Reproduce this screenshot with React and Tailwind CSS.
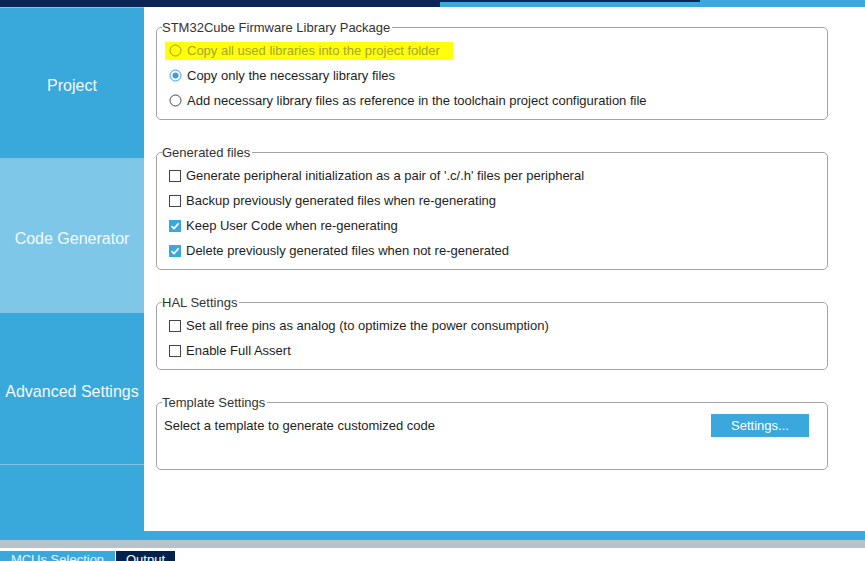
const font = { fontFamily: '"Liberation Sans", Arial, sans-serif' };

function Radio({ checked, dim }) {
  return (
    <svg width="13" height="13" viewBox="0 0 13 13" className="shrink-0">
      <circle cx="6.5" cy="6.5" r="5.5" fill={dim ? 'none' : '#fff'} stroke={checked ? '#3d9ddd' : dim ? '#9b9b2c' : '#444'} strokeWidth="1" />
      {checked && <circle cx="6.5" cy="6.5" r="3" fill="#3d9ddd" />}
    </svg>
  );
}

function Check({ checked }) {
  if (checked) {
    return (
      <svg width="12" height="12" viewBox="0 0 12 12" className="shrink-0">
        <rect x="0" y="0" width="12" height="12" fill="#3aa8dc" />
        <path d="M2.5 6.2 L5 8.6 L9.6 3.4" fill="none" stroke="#fff" strokeWidth="1.6" />
      </svg>
    );
  }
  return (
    <svg width="12" height="12" viewBox="0 0 12 12" className="shrink-0">
      <rect x="0.5" y="0.5" width="11" height="11" fill="#fff" stroke="#444" />
    </svg>
  );
}

function Group({ title, className, children }) {
  return (
    <fieldset className={`ml-3 w-[672px] rounded-[5px] border border-[#a3a3a3] ${className}`}>
      <legend className="ml-[5px] pr-[2px] text-[13px] leading-[15px] text-[#333]">{title}</legend>
      {children}
    </fieldset>
  );
}

function Row({ children, className = '' }) {
  return <div className={`flex h-[25px] items-center gap-[5px] pl-3 text-[13px] text-[#1e1e1e] ${className}`}>{children}</div>;
}

const sideItems = [
  { label: 'Project', h: 'h-[150px]', bg: 'bg-[#39a8db]' },
  { label: 'Code Generator', h: 'h-[154px]', bg: 'bg-[#7fc7e9]', active: true },
  { label: 'Advanced Settings', h: 'h-[151px]', bg: 'bg-[#39a8db]' },
];

export default function App() {
  return (
    <div className="flex h-[561px] w-[865px] flex-col overflow-hidden bg-white" style={font}>
      {/* top strip */}
      <div className="flex h-[7px] shrink-0 items-start bg-[#3aa8dc]">
        <div className="h-[7px] w-[440px] bg-[#0b2656]" />
        <div className="h-[2px] w-[260px] bg-[#0b2656]" />
      </div>

      <div className="flex h-[524px] shrink-0">
        <div className="flex w-[144px] shrink-0 flex-col bg-[#39a8db]">
          <div className="h-px bg-[#7cc5e8]" />
          {sideItems.map((s, i) => (
            <div key={s.label} className="flex flex-col">
              {i === 1 && <div className="h-px bg-[#7cc5e8]" />}
              <div className={`flex ${s.h} items-center justify-center pt-[6px] ${s.bg} text-[16px] text-[#f4fafd]`}>{s.label}</div>
            </div>
          ))}
          <div className="h-px bg-[#7cc5e8]" />
        </div>

        <div className="flex-1 pt-[13px]">
          <Group title="STM32Cube Firmware Library Package" className="pt-[3px] pb-[6px]">
            <div className="flex h-[25px] items-center pl-[8px] text-[13px]">
              <div className="flex h-[18px] w-[288px] items-center gap-[5px] bg-[#ffff0a] pl-[4px] text-[#a5a536]">
                <Radio dim />
                <span>Copy all used libraries into the project folder</span>
              </div>
            </div>
            <Row>
              <Radio checked />
              <span>Copy only the necessary library files</span>
            </Row>
            <Row>
              <Radio />
              <span>Add necessary library files as reference in the toolchain project configuration file</span>
            </Row>
          </Group>

          <Group title="Generated files" className="mt-[25px] pt-[3px] pb-[6px]">
            <Row>
              <Check />
              <span>Generate peripheral initialization as a pair of '.c/.h' files per peripheral</span>
            </Row>
            <Row>
              <Check />
              <span>Backup previously generated files when re-generating</span>
            </Row>
            <Row>
              <Check checked />
              <span>Keep User Code when re-generating</span>
            </Row>
            <Row>
              <Check checked />
              <span>Delete previously generated files when not re-generated</span>
            </Row>
          </Group>

          <Group title="HAL Settings" className="mt-[25px] pt-[3px] pb-[6px]">
            <Row>
              <Check />
              <span>Set all free pins as analog (to optimize the power consumption)</span>
            </Row>
            <Row>
              <Check />
              <span>Enable Full Assert</span>
            </Row>
          </Group>

          <Group title="Template Settings" className="mt-[25px] pt-[3px] pb-[31px]">
            <div className="flex h-[25px] items-center justify-between pl-[7px] pr-[18px] text-[13px] text-[#1e1e1e]">
              <span>Select a template to generate customized code</span>
              <button className="h-[23px] w-[98px] bg-[#3aa8dc] text-[13px] text-white">Settings...</button>
            </div>
          </Group>
        </div>
      </div>

      <div className="h-[9px] shrink-0 bg-[#3aa8dc]" />
      <div className="h-[8px] shrink-0 bg-[#b7c3ca]" />
      <div className="mt-[3px] flex h-[10px] shrink-0 gap-px overflow-hidden">
        <div className="w-[115px] bg-[#3aa8dc] pt-[1px] text-center text-[13px] leading-[15px] text-[#e6f4fb]">MCUs Selection</div>
        <div className="w-[59px] bg-[#03234b] pt-[1px] text-center text-[13px] leading-[15px] text-white">Output</div>
      </div>
    </div>
  );
}
